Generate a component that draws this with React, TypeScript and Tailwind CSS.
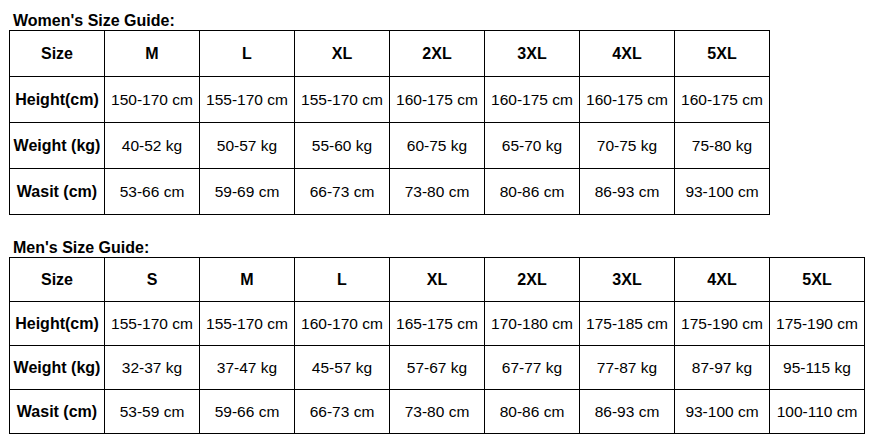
type Guide = {
  title: string;
  sizes: string[];
  rows: { label: string; values: string[] }[];
  rowH: string;
  mt: string;
};

const guides: Guide[] = [
  {
    title: "Women's Size Guide:",
    sizes: ["M", "L", "XL", "2XL", "3XL", "4XL", "5XL"],
    rows: [
      { label: "Height(cm)", values: ["150-170 cm", "155-170 cm", "155-170 cm", "160-175 cm", "160-175 cm", "160-175 cm", "160-175 cm"] },
      { label: "Weight (kg)", values: ["40-52 kg", "50-57 kg", "55-60 kg", "60-75 kg", "65-70 kg", "70-75 kg", "75-80 kg"] },
      { label: "Wasit (cm)", values: ["53-66 cm", "59-69 cm", "66-73 cm", "73-80 cm", "80-86 cm", "86-93 cm", "93-100 cm"] },
    ],
    rowH: "h-[46px]",
    mt: "mt-[11px]",
  },
  {
    title: "Men's Size Guide:",
    sizes: ["S", "M", "L", "XL", "2XL", "3XL", "4XL", "5XL"],
    rows: [
      { label: "Height(cm)", values: ["155-170 cm", "155-170 cm", "160-170 cm", "165-175 cm", "170-180 cm", "175-185 cm", "175-190 cm", "175-190 cm"] },
      { label: "Weight (kg)", values: ["32-37 kg", "37-47 kg", "45-57 kg", "57-67 kg", "67-77 kg", "77-87 kg", "87-97 kg", "95-115 kg"] },
      { label: "Wasit (cm)", values: ["53-59 cm", "59-66 cm", "66-73 cm", "73-80 cm", "80-86 cm", "86-93 cm", "93-100 cm", "100-110 cm"] },
    ],
    rowH: "h-[44px]",
    mt: "mt-[23px]",
  },
];

function SizeTable({ guide }: { guide: Guide }) {
  const cell = `${guide.rowH} w-[95px] border-r border-b border-black flex items-center justify-center whitespace-nowrap`;
  return (
    <div className={guide.mt}>
      <h2 className="ml-[4px] text-[16px] leading-[19px] font-bold text-black">{guide.title}</h2>
      <div className="flex flex-col w-fit border-l border-t border-black">
        <div className="flex">
          <div className={`${cell} font-bold text-[16px]`}>Size</div>
          {guide.sizes.map((s) => (
            <div key={s} className={`${cell} font-bold text-[16px]`}>{s}</div>
          ))}
        </div>
        {guide.rows.map((r) => (
          <div key={r.label} className="flex">
            <div className={`${cell} font-bold text-[16px]`}>{r.label}</div>
            {r.values.map((v, i) => (
              <div key={i} className={`${cell} text-[15.5px]`}>{v}</div>
            ))}
          </div>
        ))}
      </div>
    </div>
  );
}

export default function App() {
  return (
    <div className="w-[875px] h-[441px] bg-white pl-[9px] text-black font-['Liberation_Sans',Arial,sans-serif]">
      {guides.map((g) => (
        <SizeTable key={g.title} guide={g} />
      ))}
    </div>
  );
}
